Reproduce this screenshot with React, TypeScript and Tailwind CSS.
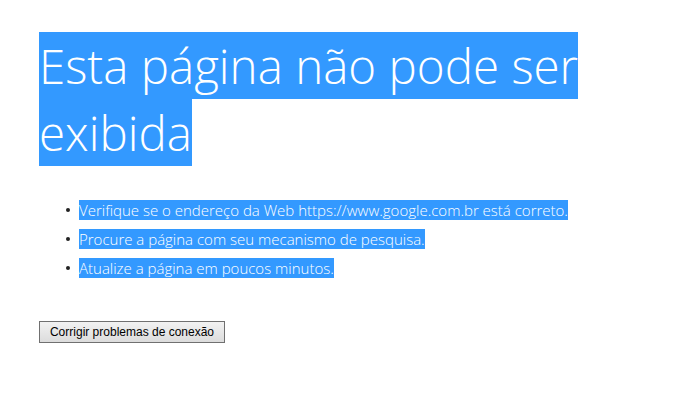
import React from 'react';

const tips = [
  'Verifique se o endereço da Web https://www.google.com.br está correto.',
  'Procure a página com seu mecanismo de pesquisa.',
  'Atualize a página em poucos minutos.',
];

const App: React.FC = () => {
  return (
    <div className="min-h-[412px] w-[693px] bg-white pl-[39px] pt-[32px] font-['Open_Sans',sans-serif]">
      <h1 className="w-[560px] text-[47.5px] font-light leading-[67px] text-white">
        <span className="bg-[#3399ff] py-[1px] box-decoration-clone">Esta página não pode ser exibida</span>
      </h1>
      <ul className="mt-[34px] ml-[27px] flex flex-col gap-[9px] text-[15px] font-light leading-[20px]">
        {tips.map((tip) => (
          <li key={tip} className="flex items-center">
            <span className="mr-[9px] h-[4px] w-[4px] rounded-full bg-[#222]" />
            <span className="bg-[#3399ff] text-white">{tip}</span>
          </li>
        ))}
      </ul>
      <button className="mt-[43px] h-[22px] w-[186px] border border-[#707070] bg-gradient-to-b from-[#f2f2f2] to-[#dcdcdc] font-['Liberation_Sans',sans-serif] text-[12px] text-black">
        Corrigir problemas de conexão
      </button>
    </div>
  );
};

export default App;
